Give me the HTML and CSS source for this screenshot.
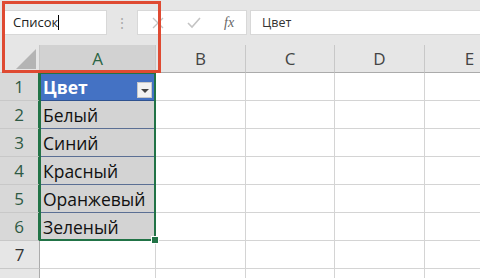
FILE: index.html
```html
<!DOCTYPE html>
<html lang="ru">
<head>
  <meta charset="UTF-8">
  <title>Список</title>
  <link rel="stylesheet" href="styles.css">
</head>
<body>

<div class="app">
  <div class="toolbar">
    <div class="name-box">Список<span class="caret"></span></div>
    <div class="dots">⋮</div>
    <div class="fx-buttons">
      <svg class="btn-icon" width="12" height="12" viewBox="0 0 12 12"><path d="M1 1 L11 11 M11 1 L1 11" stroke="#c4c4c4" stroke-width="1.4" fill="none"/></svg>
      <svg class="btn-icon" width="14" height="12" viewBox="0 0 14 12"><path d="M1 6 L5 10 L13 1" stroke="#c4c4c4" stroke-width="1.6" fill="none"/></svg>
      <span class="fx">fx</span>
    </div>
    <div class="formula">Цвет</div>
  </div>

  <div class="sheet">
    <div class="corner"><span class="corner-tri"></span></div>
    <div class="col-head active">A</div>
    <div class="col-head">B</div>
    <div class="col-head">C</div>
    <div class="col-head">D</div>
    <div class="col-head">E</div>

    <div class="row-head active">1</div>
    <div class="cell head-cell">Цвет<span class="filter"></span></div>
    <div class="cell"></div><div class="cell"></div><div class="cell"></div><div class="cell"></div>

    <div class="row-head active">2</div>
    <div class="cell data">Белый</div>
    <div class="cell"></div><div class="cell"></div><div class="cell"></div><div class="cell"></div>

    <div class="row-head active">3</div>
    <div class="cell data">Синий</div>
    <div class="cell"></div><div class="cell"></div><div class="cell"></div><div class="cell"></div>

    <div class="row-head active">4</div>
    <div class="cell data">Красный</div>
    <div class="cell"></div><div class="cell"></div><div class="cell"></div><div class="cell"></div>

    <div class="row-head active">5</div>
    <div class="cell data">Оранжевый</div>
    <div class="cell"></div><div class="cell"></div><div class="cell"></div><div class="cell"></div>

    <div class="row-head active">6</div>
    <div class="cell data last">Зеленый</div>
    <div class="cell"></div><div class="cell"></div><div class="cell"></div><div class="cell"></div>

    <div class="row-head">7</div>
    <div class="cell"></div><div class="cell"></div><div class="cell"></div><div class="cell"></div><div class="cell"></div>

    <div class="row-head"></div>
    <div class="cell"></div><div class="cell"></div><div class="cell"></div><div class="cell"></div><div class="cell"></div>

    <div class="selection"><span class="handle"></span></div>
  </div>

  <div class="highlight"></div>
</div>

</body>
</html>
```

FILE: styles.css
```css
body { margin: 0; font-family: "Open Sans", "Noto Sans", sans-serif; background: #fff; }
.app { position: relative; width: 480px; height: 278px; overflow: hidden; }

.toolbar { display: flex; align-items: center; height: 45px; background: #e6e6e6; padding-left: 4px; box-sizing: border-box; }
.name-box { width: 103px; height: 25px; background: #fff; border: 1px solid #d8d8d8; box-sizing: border-box; font-size: 13px; padding-left: 8px; line-height: 23px; color: #222; }
.caret { display: inline-block; width: 1px; height: 15px; background: #000; vertical-align: -3px; }
.dots { width: 30px; text-align: center; color: #aaa; font-size: 14px; }
.fx-buttons { width: 110px; height: 25px; background: #fff; border: 1px solid #d8d8d8; box-sizing: border-box; display: flex; align-items: center; padding-left: 14px; gap: 23px; }
.fx { font-family: "Liberation Serif", serif; font-style: italic; font-size: 14px; color: #666; }
.formula { flex: 1; height: 25px; margin-left: 3px; background: #fff; border: 1px solid #d8d8d8; border-right: none; box-sizing: border-box; font-size: 12.5px; line-height: 23px; padding-left: 11px; color: #333; }

.sheet { position: relative; display: grid; grid-template-columns: 40px 116px 90px 89px 90px 90px; grid-auto-rows: 28px; }
.corner { position: relative; background: #e6e6e6; border-right: 1px solid #c8c8c8; border-bottom: 1px solid #c8c8c8; }
.corner-tri { position: absolute; right: 3px; bottom: 3px; width: 0; height: 0; border-left: 20px solid transparent; border-bottom: 20px solid #b4b4b4; }
.col-head { background: #e6e6e6; border-right: 1px solid #c8c8c8; border-bottom: 1px solid #ababab; font-size: 17px; text-align: center; line-height: 28px; color: #444; }
.col-head.active { background: #d2d2d2; color: #2a6544; border-bottom: 2px solid #217346; }
.row-head { background: #e6e6e6; border-right: 1px solid #ababab; border-bottom: 1px solid #c8c8c8; font-size: 17px; text-align: center; line-height: 28px; color: #333; }
.row-head.active { background: #d8d8d8; color: #2e5a44; border-right: 2px solid #217346; }

.cell { border-right: 1px solid #d4d4d4; border-bottom: 1px solid #d4d4d4; font-size: 17.5px; line-height: 28px; padding-left: 3px; white-space: nowrap; color: #111; }
.head-cell { position: relative; background: #4472c4; color: #fff; font-weight: bold; border-bottom: 1px solid #2f528f; }
.data { background: #d3d3d3; border-bottom: 1px solid #5b6f94; }
.data.last { border-bottom-color: #d3d3d3; }
.filter { position: absolute; right: 3px; top: 9px; width: 15px; height: 16px; background: #f2f2f2; border: 1px solid #c8c8c8; box-sizing: border-box; }
.filter::after { content: ""; position: absolute; left: 3px; top: 6px; border-left: 4px solid transparent; border-right: 4px solid transparent; border-top: 4px solid #444; }

.selection { position: absolute; left: 39px; top: 27px; width: 117px; height: 169px; border: 2px solid #217346; box-sizing: border-box; pointer-events: none; }
.handle { position: absolute; right: -5px; bottom: -5px; width: 6px; height: 6px; background: #217346; border: 1px solid #fff; }

.highlight { position: absolute; left: 2px; top: 1px; width: 159px; height: 72px; border: 3px solid #df4a32; box-sizing: border-box; pointer-events: none; }
```
